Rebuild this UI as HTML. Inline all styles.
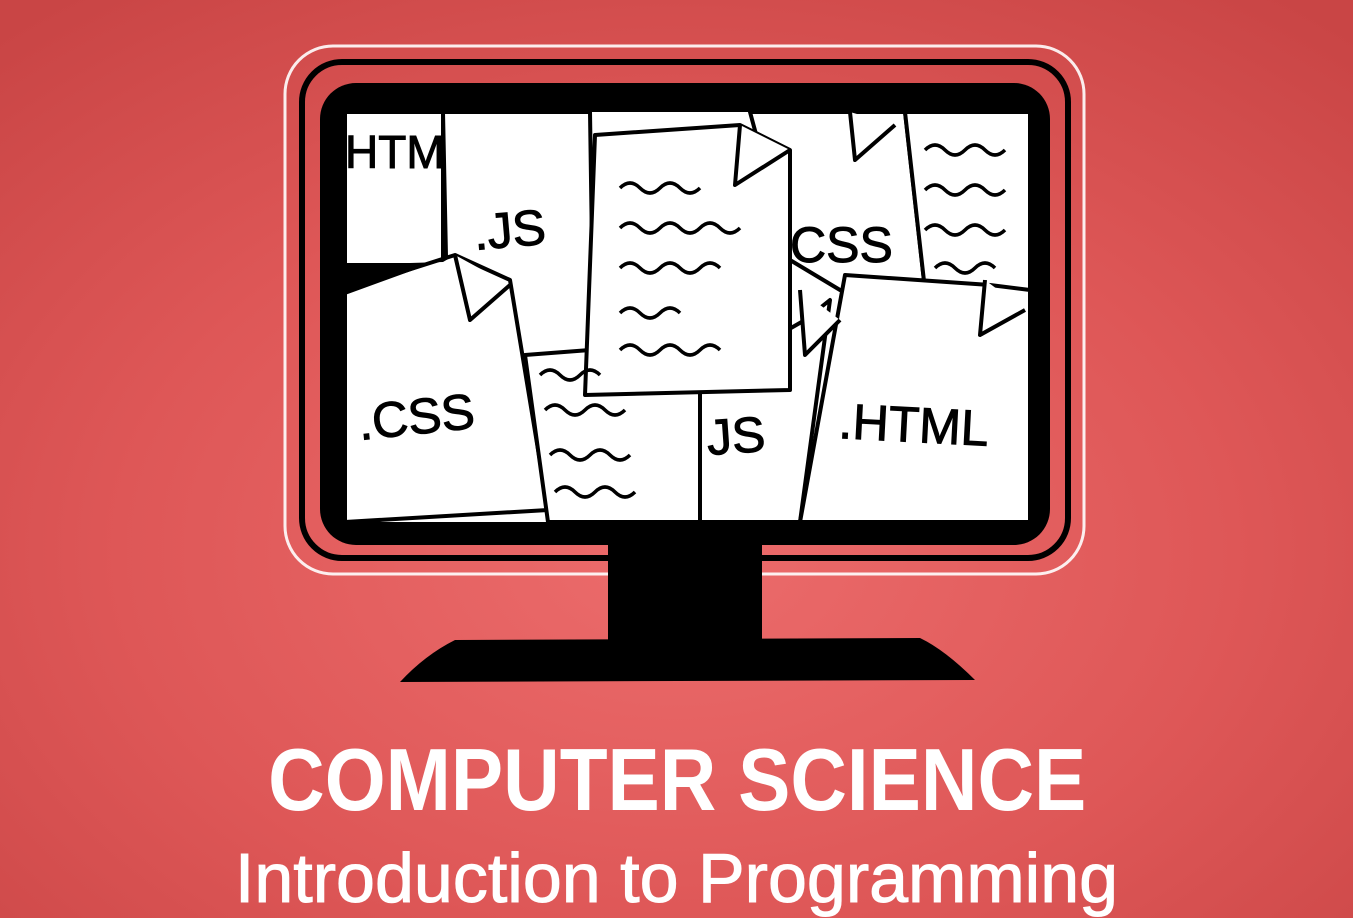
<!DOCTYPE html>
<html><head><meta charset="utf-8"><style>
html,body{margin:0;padding:0;width:1353px;height:918px;overflow:hidden}
body{background:radial-gradient(ellipse 75% 75% at 50% 60%,#ec6c6c 0%,#de5757 55%,#c94545 100%);position:relative;font-family:"Liberation Sans",sans-serif}
svg{position:absolute;left:0;top:0}
.t1{position:absolute;left:0;width:1353px;text-align:center;color:#fff;font-weight:bold;top:730px;font-size:88px;line-height:100px;transform:scaleX(0.89);transform-origin:683px 0}
.t2{position:absolute;left:0;width:1353px;text-align:center;color:#fff;top:838px;font-size:70px;line-height:80px;transform:scaleX(1.0);transform-origin:678px 0;-webkit-text-stroke:1px #fff}
</style></head><body>
<svg width="1353" height="918" viewBox="0 0 1353 918">
<rect x="285" y="46" width="799" height="528" rx="48" fill="none" stroke="#fff" stroke-width="3" opacity="0.9"/>
<rect x="302" y="62" width="766" height="496" rx="40" fill="none" stroke="#000" stroke-width="6"/>
<rect x="320" y="83" width="730" height="462" rx="36" fill="#000"/>
<rect x="345" y="112" width="685" height="410" rx="20" fill="#fff"/>
<g stroke="#000" stroke-width="4" fill="#fff" stroke-linejoin="round">
<polygon points="345,112 443,112 443,265 345,265"/>
<polygon points="443,112 590,112 595,450 450,450"/>
<polygon points="345,290 455,255 510,280 548,510 345,522"/>
<polygon points="525,355 590,350 700,380 700,522 548,522"/>
<polygon points="700,380 805,320 830,300 800,522 700,522"/>
<polygon points="750,112 905,112 925,290 840,290 790,260"/>
<polygon points="905,112 1030,112 1030,290 925,290"/>
<polygon points="845,275 990,285 1030,290 1030,522 800,522"/>
<polygon points="595,135 740,125 790,150 790,390 585,395"/>
<polyline points="455,255 470,320 510,285" />
<polyline points="740,125 735,185 790,150"/>
<polyline points="985,280 980,335 1025,310"/>
<polyline points="850,112 855,160 895,125"/>
<polyline points="800,290 805,355 840,320"/>
</g>
<polygon points="345,265 443,262 455,255 345,295" fill="#000"/>
<g fill="none" stroke="#000" stroke-width="3.5">
<path d="M620 188 q10 -10 20 0 t20 0 t20 0 t20 0"/>
<path d="M620 228 q10 -10 20 0 t20 0 t20 0 t20 0 t20 0 t20 0"/>
<path d="M620 268 q10 -10 20 0 t20 0 t20 0 t20 0 t20 0"/>
<path d="M620 313 q10 -10 20 0 t20 0 t20 0"/>
<path d="M620 350 q10 -10 20 0 t20 0 t20 0 t20 0 t20 0"/>
<path d="M925 150 q10 -10 20 0 t20 0 t20 0 t20 0"/>
<path d="M925 190 q10 -10 20 0 t20 0 t20 0 t20 0"/>
<path d="M925 230 q10 -10 20 0 t20 0 t20 0 t20 0"/>
<path d="M935 268 q10 -10 20 0 t20 0 t20 0"/>
<path d="M540 375 q10 -10 20 0 t20 0 t20 0"/>
<path d="M545 410 q10 -10 20 0 t20 0 t20 0 t20 0"/>
<path d="M550 455 q10 -10 20 0 t20 0 t20 0 t20 0"/>
<path d="M555 492 q10 -10 20 0 t20 0 t20 0 t20 0"/>
</g>
<g font-family="Liberation Sans,sans-serif" fill="#000" font-size="50" stroke="#000" stroke-width="1">
<text x="345" y="168" font-size="46">HTM</text>
<text x="475" y="250" transform="rotate(-5 475 250)">.JS</text>
<text x="790" y="262">CSS</text>
<text x="360" y="440" transform="rotate(-6 360 440)">.CSS</text>
<text x="708" y="455" transform="rotate(-4 708 455)">JS</text>
<text x="838" y="438" transform="rotate(3 838 438)">.HTML</text>
</g>
<rect x="608" y="540" width="154" height="102" fill="#000"/>
<path d="M455 640 L920 638 Q945 650 975 680 L400 682 Q425 655 455 640 Z" fill="#000"/>
</svg>
<div class="t1">COMPUTER SCIENCE</div>
<div class="t2">Introduction to Programming</div>
</body></html>
